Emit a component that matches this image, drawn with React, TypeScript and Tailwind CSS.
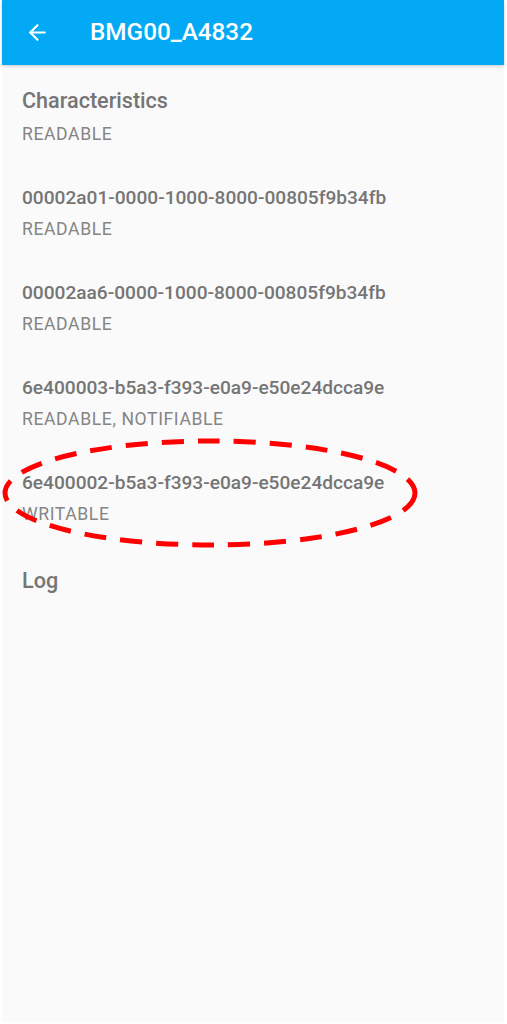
import { ArrowLeft } from 'lucide-react'

const items = [
  { uuid: '00002a01-0000-1000-8000-00805f9b34fb', props: 'READABLE' },
  { uuid: '00002aa6-0000-1000-8000-00805f9b34fb', props: 'READABLE' },
  { uuid: '6e400003-b5a3-f393-e0a9-e50e24dcca9e', props: 'READABLE, NOTIFIABLE' },
  { uuid: '6e400002-b5a3-f393-e0a9-e50e24dcca9e', props: 'WRITABLE' },
]

export default function App() {
  return (
    <div
      className="w-[507px] h-[1024px] bg-white pl-[2px] pr-[3px] pb-[2px] overflow-hidden"
      style={{ fontFamily: 'Roboto, "Noto Sans", sans-serif' }}>
      <div className="relative h-full bg-[#fafafa] flex flex-col">
        <header className="h-[65px] shrink-0 bg-[#03a9f4] flex items-center shadow-[0_1px_3px_rgba(0,0,0,0.2)] z-10">
          <ArrowLeft className="ml-[23px] text-white" size={25} strokeWidth={2} />
          <h1 className="ml-[40px] text-white text-[24.3px] font-medium">BMG00_A4832</h1>
        </header>

        <main className="px-5 pt-[23px] text-[#757575]">
          <h2 className="text-[21.6px] font-medium leading-[26px]">Characteristics</h2>
          <p className="mt-[9px] text-[17.6px] leading-[22px] tracking-[0.6px] text-[#858585]">
            READABLE
          </p>

          {items.map((item) => (
            <div key={item.uuid} className="mt-[41px]">
              <div className="text-[19.1px] font-medium leading-[24px]">{item.uuid}</div>
              <div className="mt-[8px] text-[17.6px] leading-[22px] tracking-[0.6px] text-[#858585]">
                {item.props}
              </div>
            </div>
          ))}

          <h2 className="mt-[43px] text-[21.6px] font-medium leading-[26px]">Log</h2>
        </main>

        <svg
          className="absolute left-0 top-[436px] pointer-events-none"
          width="420"
          height="114"
          viewBox="0 0 420 114">
          <ellipse
            cx="208"
            cy="57"
            rx="205"
            ry="52"
            fill="none"
            stroke="#ff0000"
            strokeWidth="5"
            strokeDasharray="22 14"
          />
        </svg>
      </div>
    </div>
  )
}
